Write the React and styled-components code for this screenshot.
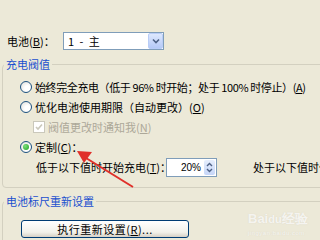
import styled, { createGlobalStyle } from 'styled-components';

const GlobalStyle = createGlobalStyle`
  html, body {
    margin: 0;
    padding: 0;
    background: #ece9d8;
  }
`;

const Screen = styled.div`
  position: relative;
  width: 320px;
  height: 240px;
  overflow: hidden;
  background: #ece9d8;
  color: #000;
  font-family: 'Noto Sans CJK SC', 'Liberation Sans', sans-serif;
  font-size: 11px;
`;

const BatteryRow = styled.div`
  display: flex;
  align-items: center;
  padding: 32px 0 0 7px;
  height: 18px;
`;

const Label = styled.span`
  width: 56px;
  white-space: nowrap;
`;

const Select = styled.div`
  display: flex;
  align-items: center;
  justify-content: space-between;
  box-sizing: border-box;
  width: 101px;
  height: 18px;
  border: 1px solid #7f9db9;
  background: #fff;
  padding-left: 4px;
  word-spacing: 3px;
`;

const DropButton = styled.span`
  display: flex;
  align-items: center;
  justify-content: center;
  box-sizing: border-box;
  width: 15px;
  height: 16px;
  border: 1px solid #b9cdf7;
  border-radius: 2px;
  background: linear-gradient(#dde8fe, #b5c9f7);
`;

const Group = styled.fieldset`
  box-sizing: border-box;
  width: 340px;
  height: ${(p) => p.$height}px;
  margin: ${(p) => p.$top}px 0 0 2px;
  padding: 0;
  border: 1px solid #d3d0c0;
  border-radius: 4px;
`;

const Legend = styled.legend`
  margin-left: 1px;
  padding: 0 2px;
  color: #1a4fcf;
  line-height: 12px;
`;

const OptionRow = styled.div`
  display: flex;
  align-items: center;
  height: 20px;
  margin-left: ${(p) => p.$indent}px;
  margin-top: ${(p) => p.$top || 0}px;
  gap: 3px;
  white-space: nowrap;
  color: ${(p) => (p.$disabled ? '#aca899' : '#000')};
`;

const OptionText = styled.span`
  letter-spacing: ${(p) => p.$tight || 0}px;
`;

const Radio = styled.span`
  position: relative;
  box-sizing: border-box;
  width: 12px;
  height: 12px;
  flex: none;
  border-radius: 50%;
  border: 1px solid #1c5180;
  background: radial-gradient(circle at 65% 65%, #fff 30%, #dcdcd5 100%);

  &::after {
    content: '';
    display: ${(p) => (p.$checked ? 'block' : 'none')};
    position: absolute;
    left: 2px;
    top: 2px;
    width: 6px;
    height: 6px;
    border-radius: 50%;
    background: radial-gradient(circle at 35% 35%, #7ee07e, #21a121);
  }
`;

const Check = styled.span`
  display: flex;
  align-items: center;
  justify-content: center;
  box-sizing: border-box;
  width: 12px;
  height: 12px;
  flex: none;
  border: 1px solid #cac8bb;
  background: #fff;
`;

const Key = styled.span`
  text-decoration: underline;
`;

const SpinRow = styled.div`
  display: flex;
  align-items: center;
  height: 20px;
  margin-left: 33px;
  white-space: nowrap;
`;

const SpinLabel = styled.span`
  width: 130px;
`;

const Spinner = styled.div`
  display: flex;
  align-items: center;
  justify-content: flex-end;
  box-sizing: border-box;
  width: 51px;
  height: 19px;
  border: 1px solid #7f9db9;
  background: #fff;
  font-family: 'Liberation Sans', sans-serif;
  font-size: 10px;
  gap: 3px;
  padding-right: 1px;
`;

const SpinArrows = styled.span`
  display: flex;
  flex-direction: column;
  width: 11px;
  height: 15px;
  border-radius: 2px;
  background: linear-gradient(#e6eefc, #c6d6f8);
`;

const StopLabel = styled.span`
  margin-left: 36px;
`;

const Button = styled.div`
  display: flex;
  align-items: center;
  justify-content: center;
  box-sizing: border-box;
  width: 168px;
  height: 18px;
  margin: 13px 0 0 18px;
  border: 1px solid #003c74;
  border-radius: 3px;
  background: linear-gradient(#fff, #f2f1ea 70%, #d6d0c5);
  letter-spacing: 0.5px;
`;

const Arrow = styled.svg`
  position: absolute;
  left: 0;
  top: 0;
  pointer-events: none;
`;

const Watermark = styled.div`
  position: absolute;
  left: 248px;
  top: 212px;
  color: rgba(255, 255, 255, 0.75);
  font-family: 'Liberation Sans', sans-serif;
  font-size: 13px;
  font-weight: bold;
  line-height: 14px;
  text-shadow: 0 0 1px rgba(200, 195, 180, 0.6);

  small {
    display: block;
    font-size: 6px;
    font-weight: normal;
    letter-spacing: 0.5px;
  }
`;

const App = () => {
  return (
    <>
      <GlobalStyle />
      <Screen>
        <BatteryRow>
          <Label>
            电池(<Key>B</Key>)：
          </Label>
          <Select>
            <span>1 - 主</span>
            <DropButton>
              <svg width="8" height="6" viewBox="0 0 8 6">
                <path d="M1 1.5 L4 4.5 L7 1.5" fill="none" stroke="#4d6185" strokeWidth="1.6" />
              </svg>
            </DropButton>
          </Select>
        </BatteryRow>

        <Group $top={8} $height={130}>
          <Legend>充电阀值</Legend>
          <OptionRow $indent={17} $top={7}>
            <Radio />
            <OptionText $tight={-0.4}>
              始终完全充电（低于 96% 时开始；处于 100% 时停止）(<Key>A</Key>)
            </OptionText>
          </OptionRow>
          <OptionRow $indent={17}>
            <Radio />
            <OptionText>
              优化电池使用期限（自动更改）(<Key>O</Key>)
            </OptionText>
          </OptionRow>
          <OptionRow $indent={30} $disabled>
            <Check>
              <svg width="8" height="8" viewBox="0 0 8 8">
                <path d="M1 4 L3 6 L7 1.5" fill="none" stroke="#cac8bb" strokeWidth="1.6" />
              </svg>
            </Check>
            <OptionText>
              阀值更改时通知我(<Key>N</Key>)
            </OptionText>
          </OptionRow>
          <OptionRow $indent={17}>
            <Radio $checked />
            <OptionText>
              定制(<Key>C</Key>)：
            </OptionText>
          </OptionRow>
          <SpinRow>
            <SpinLabel>
              低于以下值时开始充电(<Key>T</Key>)：
            </SpinLabel>
            <Spinner>
              <span>20%</span>
              <SpinArrows>
                <svg width="11" height="15" viewBox="0 0 11 15">
                  <path d="M3 6 L5.5 3.5 L8 6" fill="none" stroke="#4d6185" strokeWidth="1.4" />
                  <path d="M3 9 L5.5 11.5 L8 9" fill="none" stroke="#4d6185" strokeWidth="1.4" />
                </svg>
              </SpinArrows>
            </Spinner>
            <StopLabel>处于以下值时停止充电</StopLabel>
          </SpinRow>
        </Group>

        <Group $top={7} $height={60}>
          <Legend>电池标尺重新设置</Legend>
          <Button>
            执行重新设置(<Key>R</Key>)...
          </Button>
        </Group>

        <Watermark>
          Bai<span style={{ fontSize: 11 }}>du</span>经验
          <small>jingyan.baidu.com</small>
        </Watermark>

        <Arrow width="320" height="240" viewBox="0 0 320 240">
          <line x1="133" y1="187" x2="86" y2="158" stroke="#e0302a" strokeWidth="2" />
          <polygon points="77,151 92,152 84,163" fill="#e0302a" />
        </Arrow>
      </Screen>
    </>
  );
};

export default App;
